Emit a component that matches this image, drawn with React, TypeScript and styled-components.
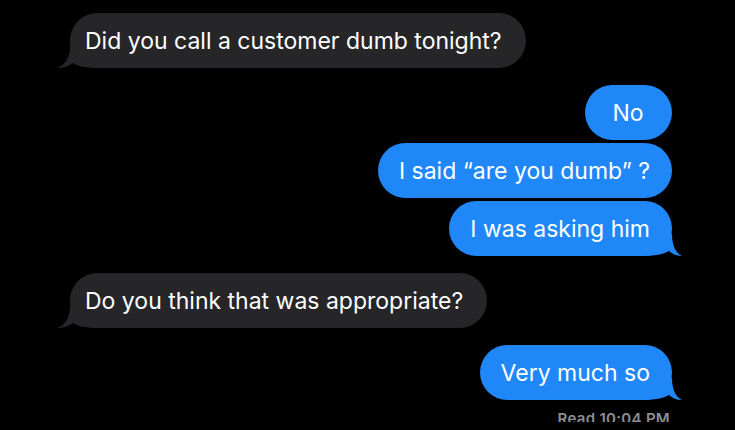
import * as React from 'react';
import styled, { createGlobalStyle } from 'styled-components';

type Side = 'them' | 'me';

const GlobalStyle = createGlobalStyle`
  html, body {
    margin: 0;
    padding: 0;
    background: #000;
  }
  body {
    width: 735px;
    height: 430px;
    overflow: hidden;
    font-family: Inter, "Noto Sans", "Liberation Sans", sans-serif;
    -webkit-font-smoothing: antialiased;
  }
`;

const gray = '#262629';
const blue = '#1f87f8';

const Thread = styled.div`
  display: flex;
  flex-direction: column;
  gap: 17px;
  padding: 13px 63px 0 70px;
`;

const Group = styled.div<{ $side: Side }>`
  display: flex;
  flex-direction: column;
  gap: 3px;
  align-items: ${p => (p.$side === 'me' ? 'flex-end' : 'flex-start')};
`;

const Bubble = styled.div<{ $side: Side }>`
  position: relative;
  display: flex;
  align-items: center;
  box-sizing: border-box;
  height: 55px;
  min-width: 87px;
  justify-content: center;
  padding: ${p => (p.$side === 'me' ? '0 22px 0 21px' : '0 24px 0 15px')};
  border-radius: 28px;
  background: ${p => (p.$side === 'me' ? blue : gray)};
  color: #fff;
  font-size: 23px;
  white-space: nowrap;
`;

const Text = styled.span`
  position: relative;
`;

const TailSvg = styled.svg<{ $side: Side }>`
  position: absolute;
  bottom: 0;
  width: 44px;
  height: 22px;
  ${p => (p.$side === 'me'
    ? 'right: -10px; transform: scaleX(-1);'
    : 'left: -13px;')}
`;

// the read receipt sits at the bottom edge, only its upper part shows
const ReceiptClip = styled.div`
  margin-top: 9px;
  margin-right: 2px;
  height: 10px;
  overflow: hidden;
`;

const Receipt = styled.div`
  color: #8d8d93;
  font-size: 15px;
  line-height: 15px;
  font-weight: 600;
  letter-spacing: 0.3px;
  margin-top: -1px;
`;

function Tail({ side }: { side: Side }) {
  const fill = side === 'me' ? blue : gray;
  const path = side === 'me'
    ? 'M10 0 C10 12 6 19 0 22 C5 22 10 20 13 17 C18 20 26 22 44 22 L44 0 Z'
    : 'M13 0 C13 12 8 19 0 22 C6 22 12 20 16 17 C20 20 28 22 44 22 L44 0 Z';
  return (
    <TailSvg $side={side} viewBox="0 0 44 22">
      <path d={path} fill={fill} />
    </TailSvg>
  );
}

interface IMessageGroup {
  side: Side;
  texts: string[];
  receipt?: string;
}

const conversation: IMessageGroup[] = [
  { side: 'them', texts: ['Did you call a customer dumb tonight?'] },
  { side: 'me', texts: ['No', 'I said “are you dumb” ?', 'I was asking him'] },
  { side: 'them', texts: ['Do you think that was appropriate?'] },
  { side: 'me', texts: ['Very much so'], receipt: 'Read 10:04 PM' },
];

export default function App() {
  return (
    <>
      <GlobalStyle />
      <Thread>
        {conversation.map((group, gi) => (
          <Group key={gi} $side={group.side}>
            {group.texts.map((text, i) => (
              <Bubble key={i} $side={group.side}>
                {i === group.texts.length - 1 && <Tail side={group.side} />}
                <Text>{text}</Text>
              </Bubble>
            ))}
            {group.receipt && (
              <ReceiptClip>
                <Receipt>{group.receipt}</Receipt>
              </ReceiptClip>
            )}
          </Group>
        ))}
      </Thread>
    </>
  );
}
